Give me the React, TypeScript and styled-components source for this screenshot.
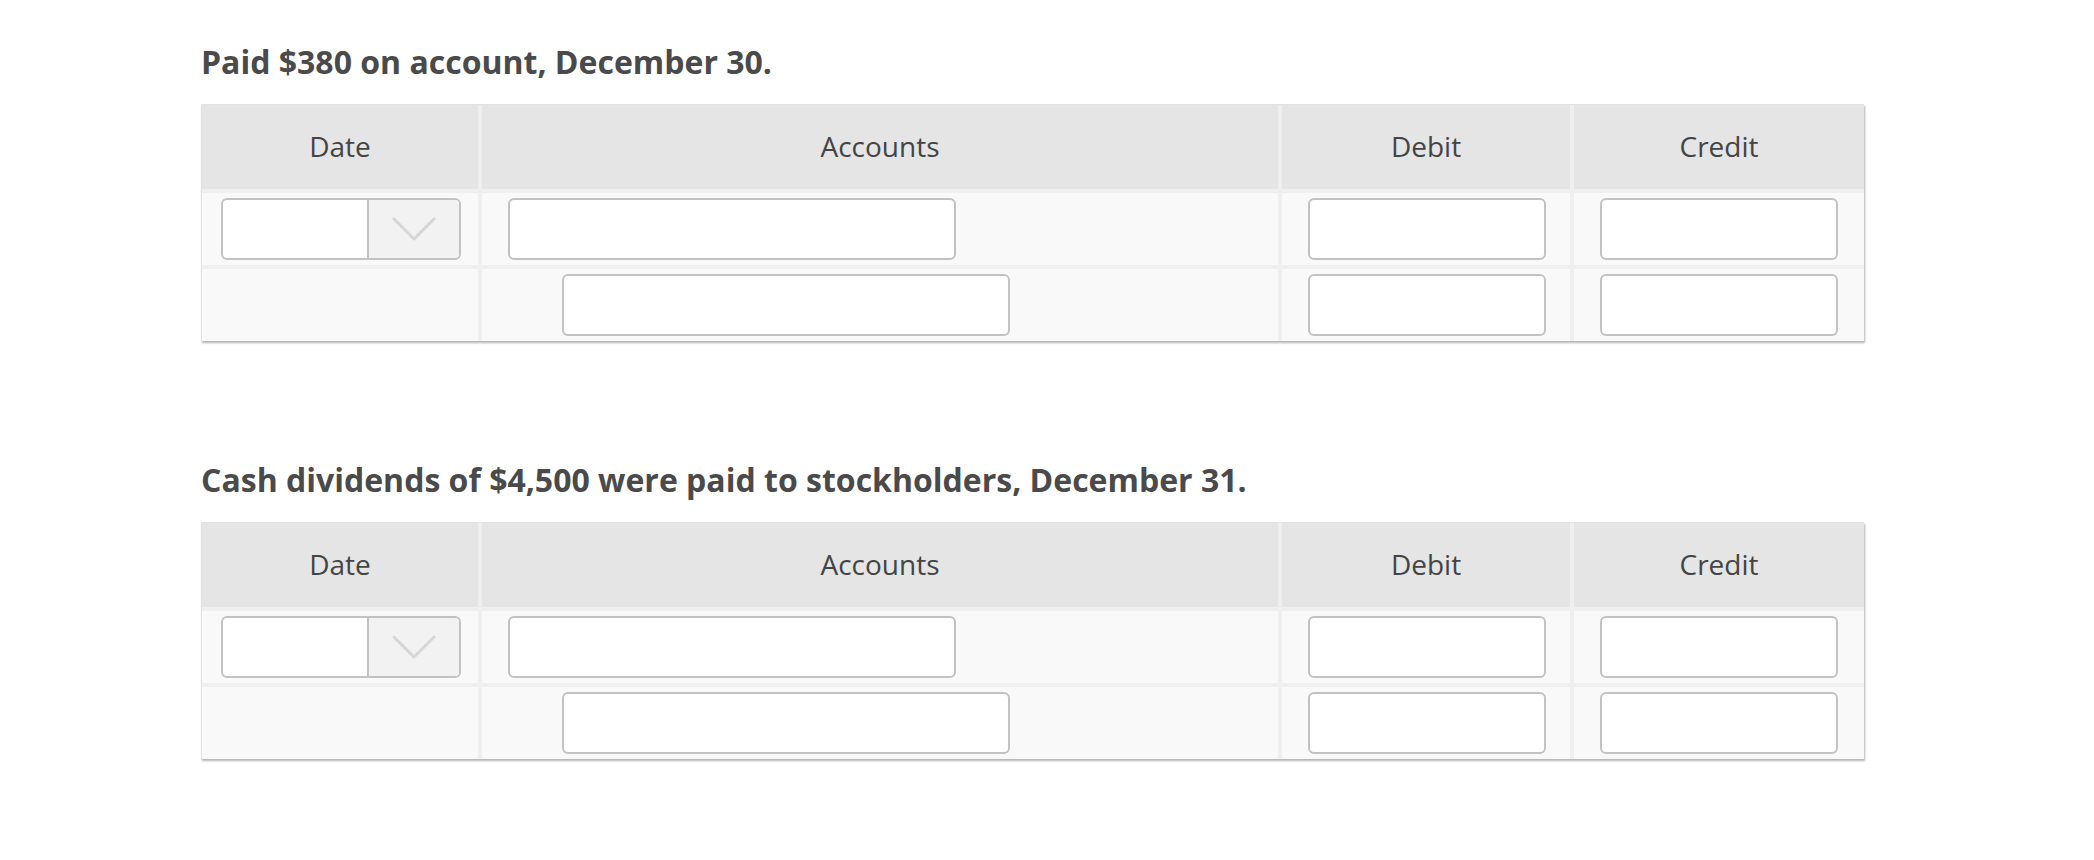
import React from "react";
import styled, { createGlobalStyle } from "styled-components";

const GlobalStyle = createGlobalStyle`
  body {
    margin: 0;
    background: #ffffff;
    font-family: "Open Sans", "Liberation Sans", sans-serif;
    color: #4a4a4a;
  }
`;

//entries
const entries = [
  { id: 1, title: "Paid $380 on account, December 30." },
  { id: 2, title: "Cash dividends of $4,500 were paid to stockholders, December 31." },
];

const columns = ["Date", "Accounts", "Debit", "Credit"];

const Chevron = () => (
  <svg width="44" height="24" viewBox="0 0 44 24" fill="none">
    <polyline
      points="2,2 22,22 42,2"
      stroke="#d6d6d6"
      strokeWidth="3"
      strokeLinecap="round"
      strokeLinejoin="round"
    />
  </svg>
);

const App: React.FC = () => {
  return (
    <>
      <GlobalStyle />
      <Page>
        {entries.map((entry) => (
          <Section key={entry.id}>
            <Title>{entry.title}</Title>
            <Journal>
              {columns.map((col) => (
                <HeadCell key={col}>{col}</HeadCell>
              ))}
              {/* first line: debit entry */}
              <Cell>
                <DateSelect>
                  <SelectValue />
                  <SelectButton>
                    <Chevron />
                  </SelectButton>
                </DateSelect>
              </Cell>
              <Cell>
                <Field $width={448} $indent={26} />
              </Cell>
              <Cell>
                <Field $width={238} $indent={26} />
              </Cell>
              <Cell>
                <Field $width={238} $indent={26} />
              </Cell>
              {/* second line: credit entry, indented */}
              <Cell />
              <Cell>
                <Field $width={448} $indent={80} />
              </Cell>
              <Cell>
                <Field $width={238} $indent={26} />
              </Cell>
              <Cell>
                <Field $width={238} $indent={26} />
              </Cell>
            </Journal>
          </Section>
        ))}
      </Page>
    </>
  );
};

const Page = styled.div`
  padding: 40px 0 40px 201px;
`;

const Section = styled.section`
  margin-bottom: 117px;
  &:last-child {
    margin-bottom: 0;
  }
`;

const Title = styled.h2`
  margin: 0 0 20px;
  font-size: 32px;
  line-height: 44px;
  font-weight: 700;
  color: #4a4a4a;
`;

const Journal = styled.div`
  display: grid;
  grid-template-columns: 276px 796px 288px 290px;
  grid-template-rows: 84px 72px 72px;
  gap: 4px;
  width: 1662px;
  background: #efefef;
  border: 1px solid #e2e2e2;
  border-right: none;
  border-bottom: none;
  box-shadow: 1px 2px 2px rgba(0, 0, 0, 0.3);
`;

const HeadCell = styled.div`
  display: flex;
  align-items: center;
  justify-content: center;
  padding-bottom: 2px;
  background: #e5e5e5;
  font-size: 28px;
  font-weight: 500;
  color: #444444;
`;

const Cell = styled.div`
  display: flex;
  align-items: center;
  background: #f9f9f9;
`;

const DateSelect = styled.div`
  display: flex;
  width: 240px;
  height: 62px;
  margin-left: 19px;
  box-sizing: border-box;
  border: 2px solid #c2c2c2;
  border-radius: 6px;
  overflow: hidden;
  background: #ffffff;
`;

const SelectValue = styled.div`
  width: 144px;
  border-right: 2px solid #c2c2c2;
`;

const SelectButton = styled.div`
  flex: 1;
  display: flex;
  align-items: center;
  justify-content: center;
  background: #f2f2f2;
`;

const Field = styled.input<{ $width: number; $indent: number }>`
  width: ${(p) => p.$width}px;
  height: 62px;
  margin: 0 0 0 ${(p) => p.$indent}px;
  padding: 0 10px;
  box-sizing: border-box;
  border: 2px solid #c2c2c2;
  border-radius: 6px;
  background: #ffffff;
  font-family: inherit;
  font-size: 24px;
  outline: none;
`;

export default App;
